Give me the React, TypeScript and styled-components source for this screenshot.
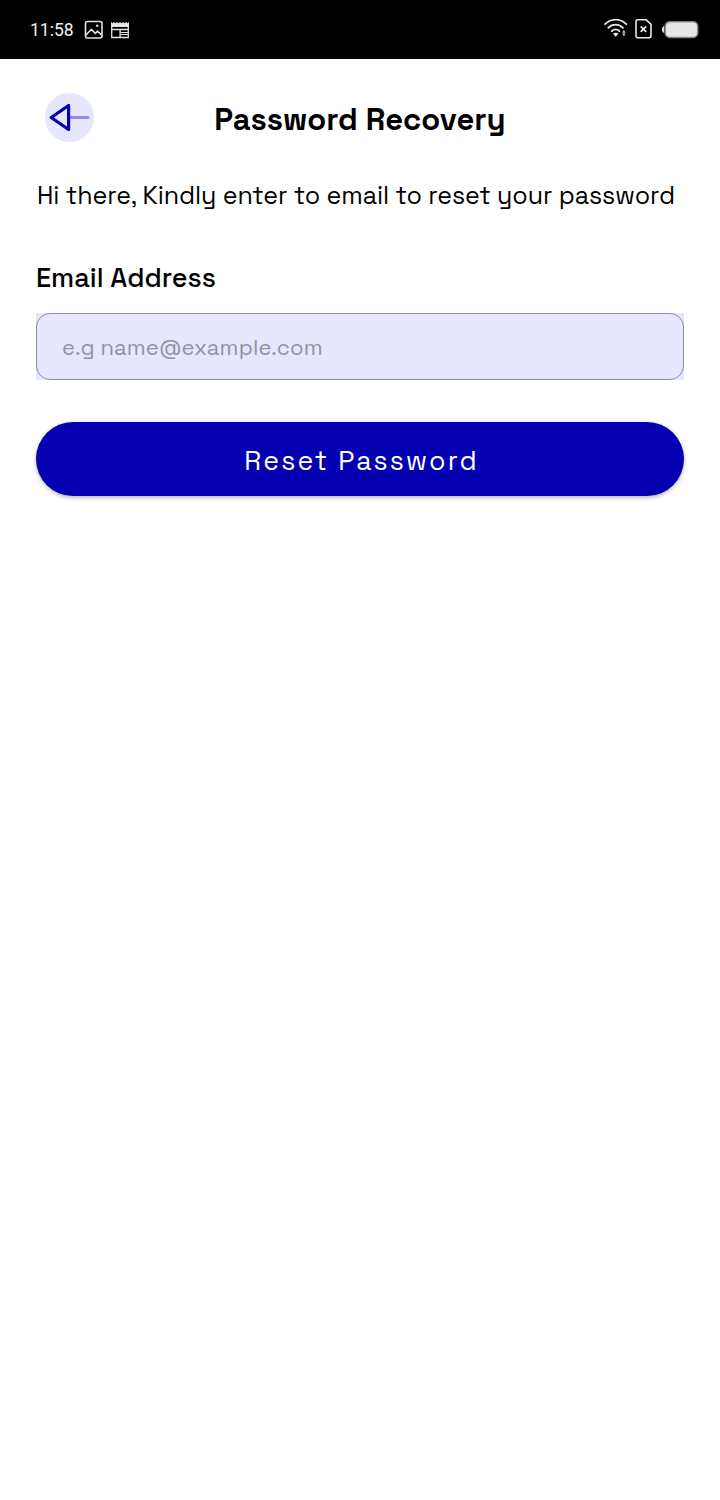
import React from "react";
import styled, { createGlobalStyle } from "styled-components";

const GlobalStyle = createGlobalStyle`
  *, *::before, *::after { box-sizing: border-box; }
  body {
    margin: 0;
    background: #ffffff;
    color: #000000;
    font-family: "Space Grotesk", Inter, "Liberation Sans", sans-serif;
  }
`;

const Screen = styled.div`
  width: 720px;
  min-height: 1500px;
  display: flex;
  flex-direction: column;
`;

const StatusBar = styled.div`
  height: 59px;
  padding: 0 21px 0 30px;
  display: flex;
  align-items: center;
  justify-content: space-between;
  background: #000000;
  color: #f1f1f1;
`;

const StatusGroup = styled.div<{ $gap: number }>`
  display: flex;
  align-items: center;
  gap: ${({ $gap }) => $gap}px;

  svg {
    display: block;
  }
`;

const Clock = styled.span`
  width: 47px;
  font: 400 17.5px/20px Roboto, sans-serif;
  white-space: nowrap;
  padding-top: 1px;
`;

const Header = styled.header`
  display: grid;
  grid-template-columns: 49px 1fr 49px;
  align-items: center;
  padding: 34px 45px 0;
`;

const BackButton = styled.button`
  width: 49px;
  height: 49px;
  padding: 0;
  border: 0;
  border-radius: 50%;
  background: #e6e6ff;

  svg {
    display: block;
  }
`;

const Title = styled.h1`
  margin: 3px 0 0;
  text-align: center;
  white-space: nowrap;
  font-size: 31px;
  line-height: 40px;
  font-weight: 600;
`;

const Form = styled.form`
  display: flex;
  flex-direction: column;
  padding: 37px 36px 0;
`;

const Intro = styled.p`
  margin: 0 0 51px 1px;
  white-space: nowrap;
  font-size: 25px;
  line-height: 32px;
  letter-spacing: -0.06px;
`;

const Label = styled.label`
  margin-bottom: 19px;
  font-size: 27px;
  line-height: 32px;
  font-weight: 500;
`;

const Field = styled.div`
  display: flex;
  height: 67px;
  margin-bottom: 42px;
  background: #e6e6ff;
`;

const Input = styled.input`
  flex: 1;
  min-width: 0;
  padding: 1px 25px 0;
  border: 1px solid #8f8da4;
  border-radius: 14px;
  background: transparent;
  font-family: inherit;
  font-size: 22px;
  letter-spacing: 0.1px;
  outline: none;

  &::placeholder {
    color: #9391a3;
    opacity: 1;
  }
`;

const SubmitButton = styled.button`
  height: 74px;
  padding: 4px 0 0 3px;
  border: 0;
  border-radius: 37px;
  background: #0500b2;
  color: #ffffff;
  font-family: inherit;
  font-size: 26.7px;
  letter-spacing: 2.15px;
  box-shadow: 0 2px 4px rgba(0, 0, 0, 0.26), 0 0 2px rgba(0, 0, 0, 0.08);
`;

const PictureIcon = () => (
  <svg width="19" height="19" viewBox="0 0 19 19" fill="none" stroke="#e4e4e4">
    <rect x="1.5" y="1.5" width="16.5" height="16.5" rx="2" strokeWidth="1.6" />
    <path d="M2 15 7.3 9.300l4 4 2.200-2.200 4.300 4.200" strokeWidth="1.600" />
    <circle cx="13.2" cy="5.8" r="1.2" fill="#e4e4e4" stroke="none" />
  </svg>
);

const NewsIcon = () => (
  <svg width="20" height="18" viewBox="0 0 20 18" fill="none" stroke="#e4e4e4">
    <g transform="translate(.5 1)">
      <path d="M.5 5V0l1.500 1.300L3.500 0 5 1.300 6.500 0 8 1.300 9.500 0 11 1.300 12.500 0 14 1.300 15.500 0 17 1.300 18.500 0v5z" fill="#e4e4e4" stroke="none" />
      <path d="M1.200 4v11.500h16.600V4M1 7.500h17M9.600 8v7.500" strokeWidth="1.300" />
      <path d="M10 10.500h7.500M10 12.500h7.500" strokeWidth="1" />
    </g>
  </svg>
);

const WifiIcon = () => (
  <svg width="24" height="20" viewBox="0 0 24 20" fill="none" stroke="#e8e8e8" strokeLinecap="round">
    <path d="M1 5.200C7-.8 16.500-.8 22.300 5.200" strokeWidth="1.800" />
    <path d="M4.300 8.900c4.200-4.300 10.600-4.300 14.700 0" strokeWidth="1.800" />
    <path d="M7.800 12.100c2.300-2.200 5.600-2.200 7.700 0" strokeWidth="1.800" />
    <path d="M9 14.700c1.500-1.300 4-1.300 5.400 0l-2.700 3.100z" fill="#e8e8e8" stroke="none" />
    <path d="m19.900 10.800 1.600 2.900h-3.200zM19.900 17.400l-1.600-2.900h3.200z" fill="#d8d8d8" stroke="none" />
  </svg>
);

const SimIcon = () => (
  <svg width="18" height="20" viewBox="0 0 18 20" fill="none" stroke="#e8e8e8">
    <path d="M3 .8h8.300L16 5.300V16.800q0 2-2 2H3q-2 0-2-2V2.800q0-2 2-2z" strokeWidth="1.600" />
    <path d="m5.700 7.300 5.500 5.500M11.200 7.300l-5.500 5.500" strokeWidth="1.700" />
  </svg>
);

const BatteryIcon = () => (
  <svg width="38" height="18" viewBox="0 0 38 18">
    <path d="M3.200 5C.2 6 .2 11 3.200 12z" fill="#e6e6e6" />
    <rect x="4.2" y=".8" width="32.5" height="15.6" rx="4.5" fill="#e6e6e6" stroke="#858585" strokeWidth="1.5" />
  </svg>
);

const SignalGroup = styled(StatusGroup)`
  padding-bottom: 1px;

  svg:last-child {
    margin: 1px 0 0 1px;
  }
`;

const BackIcon = () => (
  <svg width="49" height="49" viewBox="0 0 49 49" fill="none" strokeLinecap="round" strokeLinejoin="round">
    <path d="M25 24.500h18" stroke="#908fe2" strokeWidth="3" />
    <path d="M23.600 12.500v24L6.200 24.500z" stroke="#0500b2" strokeWidth="3.200" />
  </svg>
);

export default function App() {
  return (
    <>
      <GlobalStyle />
      <Screen>
        <StatusBar>
          <StatusGroup $gap={7}>
            <Clock>11:58</Clock>
            <PictureIcon />
            <NewsIcon />
          </StatusGroup>
          <SignalGroup $gap={7}>
            <WifiIcon />
            <SimIcon />
            <BatteryIcon />
          </SignalGroup>
        </StatusBar>
        <Header>
          <BackButton type="button" aria-label="Back">
            <BackIcon />
          </BackButton>
          <Title>Password Recovery</Title>
        </Header>
        <Form>
          <Intro>Hi there, Kindly enter to email to reset your password</Intro>
          <Label htmlFor="email">Email Address</Label>
          <Field>
            <Input id="email" type="email" placeholder="e.g name@example.com" />
          </Field>
          <SubmitButton type="button">Reset Password</SubmitButton>
        </Form>
      </Screen>
    </>
  );
}
